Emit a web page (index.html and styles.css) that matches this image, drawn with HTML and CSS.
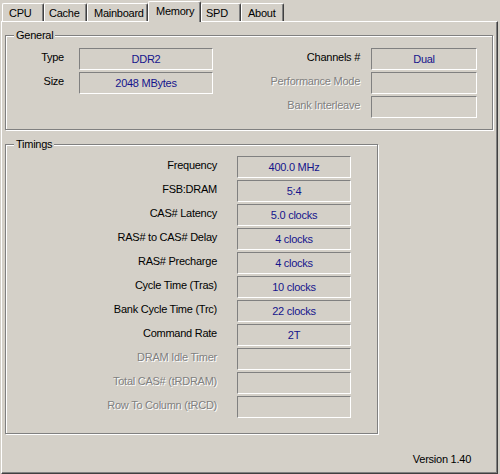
FILE: index.html
```html
<!DOCTYPE html>
<html>
<head>
<meta charset="utf-8">
<link rel="stylesheet" href="styles.css">
</head>
<body>
<div class="window">
  <div class="tabs">
    <div class="tab tab-cpu">CPU</div>
    <div class="tab tab-cache">Cache</div>
    <div class="tab tab-mainboard">Mainboard</div>
    <div class="tab tab-memory active">Memory</div>
    <div class="tab tab-spd">SPD</div>
    <div class="tab tab-about">About</div>
  </div>
  <div class="panel">
    <div class="group group-general">
      <div class="group-title">General</div>
      <div class="general-grid">
        <div class="lbl lbl-a">Type</div>
        <div class="field">DDR2</div>
        <div class="lbl lbl-c">Channels #</div>
        <div class="field">Dual</div>
        <div class="lbl lbl-a">Size</div>
        <div class="field">2048 MBytes</div>
        <div class="lbl lbl-c disabled">Performance Mode</div>
        <div class="field"></div>
        <div class="lbl lbl-c disabled col3">Bank Interleave</div>
        <div class="field"></div>
      </div>
    </div>
    <div class="group group-timings">
      <div class="group-title">Timings</div>
      <div class="timings-grid">
        <div class="lbl lbl-t">Frequency</div><div class="field">400.0 MHz</div>
        <div class="lbl lbl-t">FSB:DRAM</div><div class="field">5:4</div>
        <div class="lbl lbl-t">CAS# Latency</div><div class="field">5.0 clocks</div>
        <div class="lbl lbl-t">RAS# to CAS# Delay</div><div class="field">4 clocks</div>
        <div class="lbl lbl-t">RAS# Precharge</div><div class="field">4 clocks</div>
        <div class="lbl lbl-t">Cycle Time (Tras)</div><div class="field">10 clocks</div>
        <div class="lbl lbl-t">Bank Cycle Time (Trc)</div><div class="field">22 clocks</div>
        <div class="lbl lbl-t">Command Rate</div><div class="field">2T</div>
        <div class="lbl lbl-t disabled">DRAM Idle Timer</div><div class="field"></div>
        <div class="lbl lbl-t disabled">Total CAS# (tRDRAM)</div><div class="field"></div>
        <div class="lbl lbl-t disabled">Row To Column (tRCD)</div><div class="field"></div>
      </div>
    </div>
    <div class="footer">Version 1.40</div>
  </div>
</div>
</body>
</html>
```
FILE: styles.css
```css
* { box-sizing: border-box; }
html, body { margin: 0; padding: 0; }
body {
  background: #d4d0c8;
  font-family: "Liberation Sans", Arial, sans-serif;
  font-size: 11px;
  letter-spacing: -0.25px;
  color: #000;
}
.window { width: 500px; height: 474px; overflow: hidden; }

.tabs {
  display: flex;
  align-items: flex-end;
  height: 21px;
  padding-left: 2px;
}
.tab {
  height: 18px;
  display: flex;
  align-items: center;
  padding-left: 6px;
  border-top: 1px solid #fff;
  border-left: 1px solid #fff;
  border-right: 1px solid #404040;
  box-shadow: inset -1px 0 0 #808080;
  border-radius: 2px 2px 0 0;
  white-space: nowrap;
}
.tab-cpu { width: 42px; }
.tab-cache { width: 43px; padding-left: 4px; }
.tab-mainboard { width: 61px; }
.tab-memory { width: 53px; padding-left: 7px; }
.tab-spd { width: 40px; padding-left: 4px; }
.tab-about { width: 43px; padding-left: 6px; }
.tab.active {
  height: 21px;
  margin-bottom: -1px;
  padding-bottom: 2px;
  position: relative;
  z-index: 1;
  background: #d4d0c8;
}

.panel {
  margin-left: 1px;
  width: 497px;
  height: 453px;
  border-top: 1px solid #fff;
  border-left: 1px solid #fff;
  border-right: 1px solid #404040;
  border-bottom: 1px solid #404040;
  box-shadow: inset -1px -1px 0 #808080;
  display: flex;
  flex-direction: column;
  align-items: flex-start;
  padding-left: 3px;
  padding-top: 13px;
}

.group {
  position: relative;
  border: 1px solid #808080;
  box-shadow: 1px 1px 0 #fff, inset 1px 1px 0 #fff;
}
.group-title {
  position: absolute;
  left: 8px;
  top: -7px;
  padding: 0 2px;
  line-height: 13px;
  background: #d4d0c8;
}
.group-general {
  width: 488px;
  height: 95px;
  padding-top: 12px;
}
.group-timings {
  width: 373px;
  height: 290px;
  margin-top: 14px;
  padding-top: 11px;
}

.general-grid {
  display: grid;
  grid-template-columns: 73px 134px 158px 106px;
  grid-auto-rows: 22px;
  row-gap: 2px;
}
.timings-grid {
  display: grid;
  grid-template-columns: 231px 114px;
  grid-auto-rows: 22px;
  row-gap: 2px;
}
.col3 { grid-column: 3; }

.lbl {
  text-align: right;
  line-height: 18px;
  white-space: nowrap;
}
.lbl-a { padding-right: 15px; }
.lbl-c { padding-right: 11px; }
.lbl-t { padding-right: 20px; }
.disabled {
  color: #808080;
  text-shadow: 1px 1px 0 #fff;
}

.field {
  border: 1px solid;
  border-color: #808080 #fff #fff #808080;
  text-align: center;
  line-height: 20px;
  color: #14148c;
  white-space: nowrap;
}

.footer {
  align-self: stretch;
  margin-top: 19px;
  padding-right: 26px;
  text-align: right;
  line-height: 13px;
}
```
